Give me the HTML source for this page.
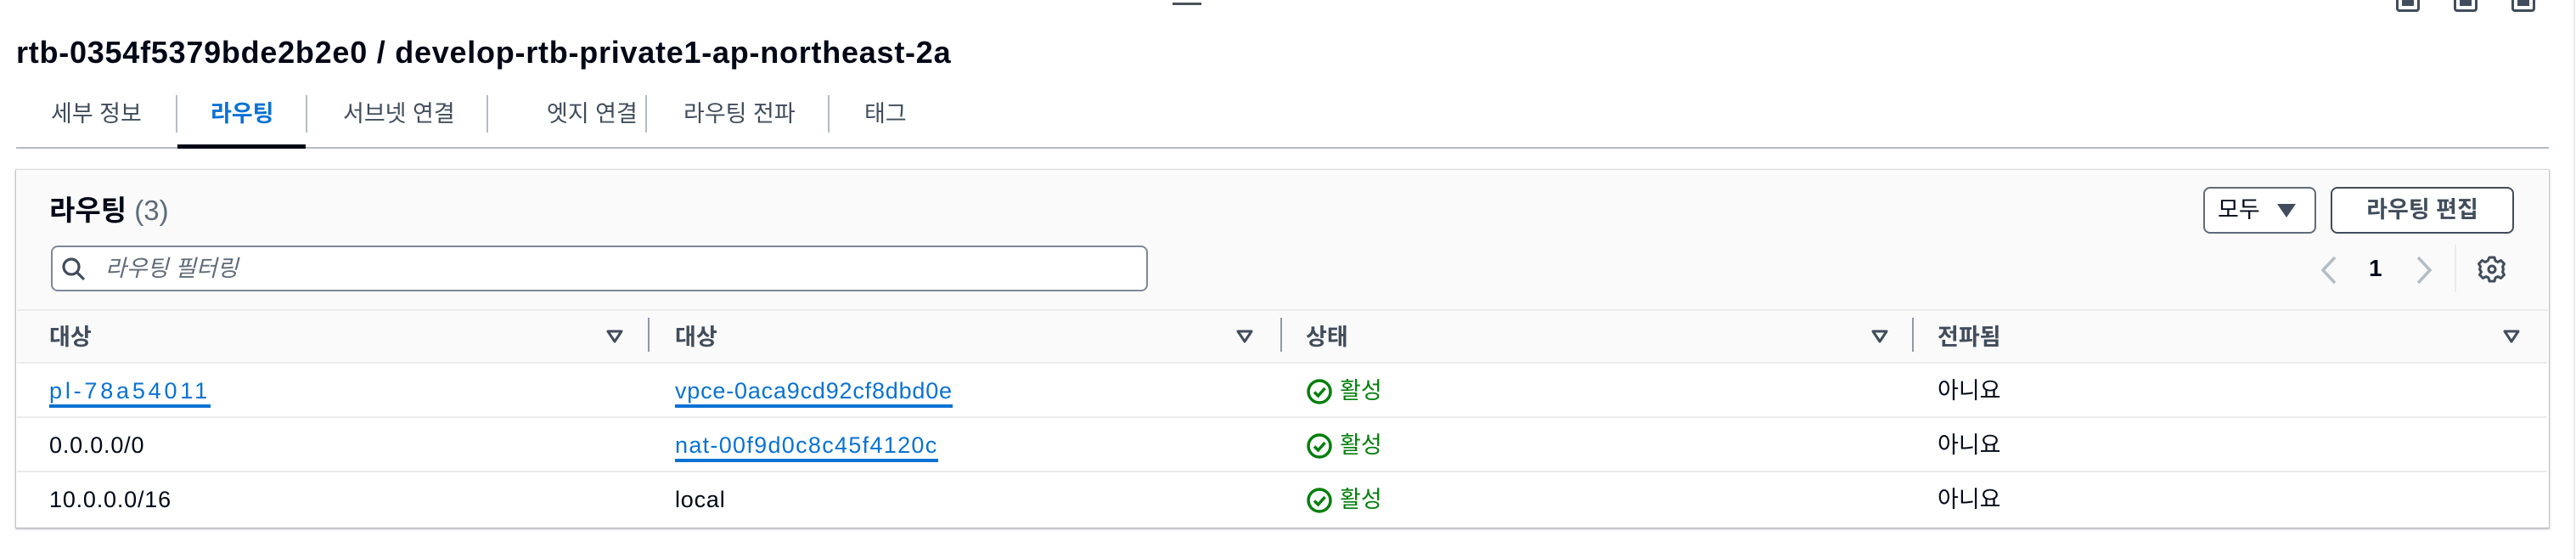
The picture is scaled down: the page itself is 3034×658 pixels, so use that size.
<!DOCTYPE html>
<html><head><meta charset="utf-8"><style>
*{margin:0;padding:0;box-sizing:border-box}
body{width:3034px;height:658px;background:#fff;position:relative;overflow:hidden;font-family:"Liberation Sans","Noto Sans CJK KR",sans-serif;color:#000716}
.a{position:absolute;white-space:nowrap}
.tab{position:absolute;top:116px;font-size:27px;color:#414d5c;line-height:36px}
.sep{position:absolute;top:112px;width:2px;height:44px;background:#b4bcc4}
.th{position:absolute;top:380px;font-size:27px;font-weight:bold;color:#414d5c;line-height:34px}
.cs{position:absolute;top:374px;width:2px;height:40px;background:#8d99a8}
.row{position:absolute;left:20px;width:2980px;height:2px;background:#e9ebed}
.td{position:absolute;font-size:27px;line-height:34px}
.lt{letter-spacing:0.8px}
.lk{color:#0972d3;border-bottom:4px solid #0972d3;line-height:30px;display:inline-block;padding-bottom:1px}
.ok{color:#037f0c}
</style></head><body>
<div class="a" style="left:1381px;top:3px;width:34px;height:3px;background:#4a525c"></div>
<div class="a" style="left:2822px;top:0;width:28px;height:14px;border:3px solid #414d5c;border-top:0;border-radius:0 0 4px 4px"><div style="margin:0 4px;height:7px;background:#414d5c"></div></div>
<div class="a" style="left:2890px;top:0;width:28px;height:14px;border:3px solid #414d5c;border-top:0;border-radius:0 0 4px 4px"><div style="margin:0 4px;height:7px;background:#414d5c"></div></div>
<div class="a" style="left:2958px;top:0;width:28px;height:14px;border:3px solid #414d5c;border-top:0;border-radius:0 0 4px 4px"><div style="margin:0 4px;height:7px;background:#414d5c"></div></div>
<div class="a" style="left:3031px;top:0;width:2px;height:658px;background:#e9ebed"></div>

<div class="a" style="left:19px;top:41px;font-size:36px;font-weight:bold;line-height:42px;letter-spacing:0.75px">rtb-0354f5379bde2b2e0 / develop-rtb-private1-ap-northeast-2a</div>

<div class="tab" style="left:60px">세부 정보</div>
<div class="tab" style="left:248px;color:#0972d3;font-weight:bold">라우팅</div>
<div class="tab" style="left:404px">서브넷 연결</div>
<div class="tab" style="left:644px">엣지 연결</div>
<div class="tab" style="left:805px">라우팅 전파</div>
<div class="tab" style="left:1018px">태그</div>
<div class="sep" style="left:207px"></div><div class="sep" style="left:360px"></div><div class="sep" style="left:573px"></div><div class="sep" style="left:760px"></div><div class="sep" style="left:975px"></div>
<div class="a" style="left:19px;top:173px;width:2983px;height:2px;background:#b4bcc4"></div>
<div class="a" style="left:209px;top:170px;width:151px;height:5px;background:#000716"></div>

<div class="a" style="left:19px;top:200px;width:2983px;height:421px;background:#fff;box-shadow:0 1px 2px 1px rgba(0,7,22,.25),0 0 0 1px #e9ebed"></div>
<div class="a" style="left:20px;top:201px;width:2981px;height:226px;background:#fafafa"></div>
<div class="a" style="left:20px;top:364px;width:2981px;height:2px;background:#e9ebed"></div>

<div class="a" style="left:58px;top:228px;font-size:33px;font-weight:bold;line-height:40px">라우팅 <span style="font-weight:normal;color:#5f6b7a">(3)</span></div>
<div class="a" style="left:60px;top:289px;width:1292px;height:54px;border:2px solid #7d8998;border-radius:8px;background:#fff"></div>
<svg class="a" style="left:72px;top:302px" width="30" height="30" viewBox="0 0 30 30"><circle cx="12" cy="12" r="9" fill="none" stroke="#414d5c" stroke-width="3.2"/><path d="M18.5 18.5 L26 26" stroke="#414d5c" stroke-width="3.2" stroke-linecap="round"/></svg>
<div class="a" style="left:124px;top:299px;font-size:27px;font-style:italic;color:#5f6b7a;line-height:34px">라우팅 필터링</div>

<div class="a" style="left:2595px;top:220px;width:133px;height:55px;border:2px solid #5f6b7a;border-radius:8px;background:#fff"></div>
<div class="a" style="left:2612px;top:230px;font-size:27px;line-height:34px">모두</div>
<svg class="a" style="left:2682px;top:240px" width="22" height="16"><path d="M0 0H22L11 16Z" fill="#414d5c"/></svg>
<div class="a" style="left:2745px;top:220px;width:216px;height:55px;border:2px solid #414d5c;border-radius:8px;background:#fff;text-align:center;font-size:27px;font-weight:bold;color:#414d5c;line-height:50px">라우팅 편집</div>

<svg class="a" style="left:2730px;top:300px" width="26" height="36"><path d="M20 3 L6 18 L20 33" fill="none" stroke="#b4bcc4" stroke-width="3.5"/></svg>
<div class="a" style="left:2790px;top:298px;font-size:28px;font-weight:bold;line-height:36px">1</div>
<svg class="a" style="left:2842px;top:300px" width="26" height="36"><path d="M6 3 L20 18 L6 33" fill="none" stroke="#b4bcc4" stroke-width="3.5"/></svg>
<div class="a" style="left:2891px;top:288px;width:2px;height:56px;background:#e9ebed"></div>
<svg class="a" style="left:2918px;top:300px" width="34" height="34" viewBox="0 0 34 34"><path d="M14 3h6l1 4 3 1.5 3.5-2 4 4-2 3.5L30.5 17l0 0 -1 3 2 3.5-4 4-3.5-2-3 1.5-1 4h-6l-1-4-3-1.5-3.5 2-4-4 2-3.5L2.5 17l1-3-2-3.5 4-4 3.5 2 3-1.5z" fill="none" stroke="#414d5c" stroke-width="3" stroke-linejoin="round"/><circle cx="17" cy="17" r="4" fill="none" stroke="#414d5c" stroke-width="3"/></svg>

<div class="th" style="left:58px">대상</div>
<div class="th" style="left:795px">대상</div>
<div class="th" style="left:1538px">상태</div>
<div class="th" style="left:2282px">전파됨</div>
<svg class="a" style="left:714px;top:388px" width="20" height="16"><path d="M2 2H18L10 14Z" fill="none" stroke="#414d5c" stroke-width="3" stroke-linejoin="round"/></svg>
<svg class="a" style="left:1456px;top:388px" width="20" height="16"><path d="M2 2H18L10 14Z" fill="none" stroke="#414d5c" stroke-width="3" stroke-linejoin="round"/></svg>
<svg class="a" style="left:2204px;top:388px" width="20" height="16"><path d="M2 2H18L10 14Z" fill="none" stroke="#414d5c" stroke-width="3" stroke-linejoin="round"/></svg>
<svg class="a" style="left:2948px;top:388px" width="20" height="16"><path d="M2 2H18L10 14Z" fill="none" stroke="#414d5c" stroke-width="3" stroke-linejoin="round"/></svg>
<div class="cs" style="left:763px"></div><div class="cs" style="left:1508px"></div><div class="cs" style="left:2252px"></div>

<div class="row" style="top:426px"></div>
<div class="row" style="top:490px"></div>
<div class="row" style="top:554px"></div>

<div class="td lt" style="left:58px;top:443px"><span class="lk" style="letter-spacing:3.8px">pl-78a54011</span></div>
<div class="td lt" style="left:795px;top:443px"><span class="lk">vpce-0aca9cd92cf8dbd0e</span></div>
<div class="td lt" style="left:58px;top:507px">0.0.0.0/0</div>
<div class="td lt" style="left:795px;top:507px"><span class="lk" style="letter-spacing:1.3px">nat-00f9d0c8c45f4120c</span></div>
<div class="td lt" style="left:58px;top:571px">10.0.0.0/16</div>
<div class="td lt" style="left:795px;top:571px">local</div>

<svg class="a" style="left:1538px;top:445px" width="32" height="32" viewBox="0 0 32 32"><circle cx="16" cy="16" r="13" fill="none" stroke="#037f0c" stroke-width="3.5"/><path d="M10 16.5l4.5 4.5 8-9" fill="none" stroke="#037f0c" stroke-width="3.5"/></svg>
<svg class="a" style="left:1538px;top:509px" width="32" height="32" viewBox="0 0 32 32"><circle cx="16" cy="16" r="13" fill="none" stroke="#037f0c" stroke-width="3.5"/><path d="M10 16.5l4.5 4.5 8-9" fill="none" stroke="#037f0c" stroke-width="3.5"/></svg>
<svg class="a" style="left:1538px;top:573px" width="32" height="32" viewBox="0 0 32 32"><circle cx="16" cy="16" r="13" fill="none" stroke="#037f0c" stroke-width="3.5"/><path d="M10 16.5l4.5 4.5 8-9" fill="none" stroke="#037f0c" stroke-width="3.5"/></svg>
<div class="td ok" style="left:1578px;top:443px">활성</div>
<div class="td ok" style="left:1578px;top:507px">활성</div>
<div class="td ok" style="left:1578px;top:571px">활성</div>
<div class="td" style="left:2282px;top:443px">아니요</div>
<div class="td" style="left:2282px;top:507px">아니요</div>
<div class="td" style="left:2282px;top:571px">아니요</div>
</body></html>
